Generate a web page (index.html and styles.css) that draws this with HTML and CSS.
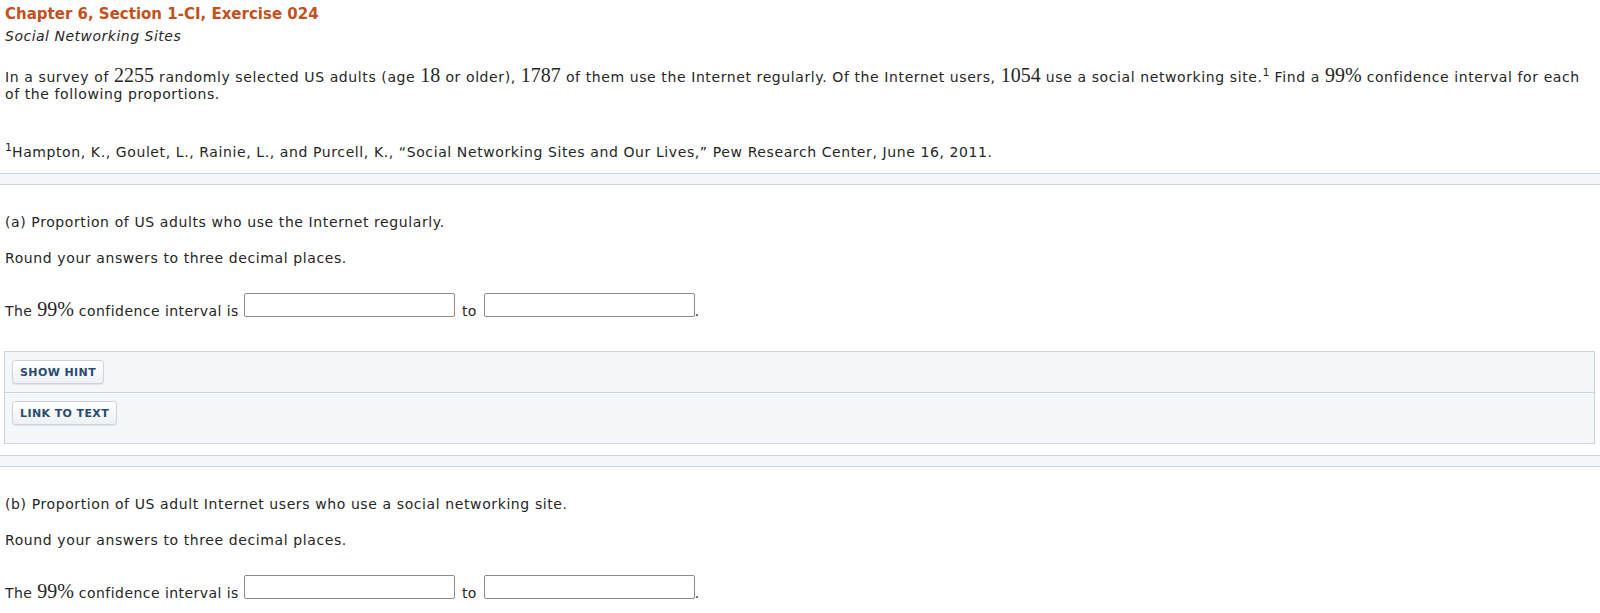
FILE: index.html
```html
<!DOCTYPE html>
<html>
<head>
<meta charset="utf-8">
<link rel="stylesheet" href="styles.css">
</head>
<body>
<div class="page">
  <div class="header">
    <div class="title">Chapter 6, Section 1-CI, Exercise 024</div>
    <div class="subtitle">Social Networking Sites</div>
  </div>
  <p class="question">In a survey of <span class="m">2255</span> randomly selected US adults (age <span class="m">18</span> or older), <span class="m">1787</span> of them use the Internet regularly. Of the Internet users, <span class="m">1054</span> use a social networking site.<sup>1</sup> Find a <span class="m">99%</span> confidence interval for each of the following proportions.</p>
  <p class="footnote"><sup>1</sup>Hampton, K., Goulet, L., Rainie, L., and Purcell, K., “Social Networking Sites and Our Lives,” Pew Research Center, June 16, 2011.</p>
  <div class="band"></div>

  <div class="part">
    <p class="line">(a) Proportion of US adults who use the Internet regularly.</p>
    <p class="line">Round your answers to three decimal places.</p>
    <p class="answer"><span class="lbl">The <span class="m">99%</span> confidence interval is</span><span class="box"></span><span class="lbl to">to</span><span class="box"></span><span class="lbl">.</span></p>
  </div>

  <div class="tools">
    <div class="tool-row"><button class="btn">SHOW HINT</button></div>
    <div class="tool-row last"><button class="btn">LINK TO TEXT</button></div>
  </div>
  <div class="band after-tools"></div>

  <div class="part">
    <p class="line">(b) Proportion of US adult Internet users who use a social networking site.</p>
    <p class="line">Round your answers to three decimal places.</p>
    <p class="answer"><span class="lbl">The <span class="m">99%</span> confidence interval is</span><span class="box"></span><span class="lbl to">to</span><span class="box"></span><span class="lbl">.</span></p>
  </div>
</div>
</body>
</html>
```

FILE: styles.css
```css
html, body {
  margin: 0;
  padding: 0;
  background: #ffffff;
}
body {
  font-family: "DejaVu Sans", Verdana, sans-serif;
  font-size: 14px;
  letter-spacing: 0.6px;
  color: #262626;
}
.page {
  padding: 5px 5px 0 5px;
}
.title {
  font-weight: bold;
  font-size: 15px;
  letter-spacing: 0;
  color: #c4501c;
  line-height: 18px;
}
.subtitle {
  font-style: italic;
  letter-spacing: 0.5px;
  line-height: 18px;
  margin-top: 4px;
}
.question {
  margin: 24px 0 0 0;
  line-height: 17px;
}
.m {
  font-family: "Liberation Serif", "Times New Roman", serif;
  font-size: 20px;
  letter-spacing: 0;
  line-height: 0;
}
sup {
  font-size: 11px;
  line-height: 0;
  vertical-align: 6px;
  letter-spacing: 0;
}
.footnote {
  margin: 41px 0 0 0;
  line-height: 17px;
}
.band {
  margin: 12px -5px 0 -5px;
  height: 10px;
  border-top: 1px solid #cfd4da;
  border-bottom: 1px solid #cfd4da;
  background: #f5f8fb;
}
.band.after-tools {
  margin-top: 11px;
}
.part {
  padding-top: 29px;
}
.line {
  margin: 0 0 19px 0;
  line-height: 17px;
}
.answer {
  margin: 26px 0 0 0;
  display: flex;
  align-items: flex-end;
  height: 24px;
  white-space: pre;
}
.lbl {
  line-height: 17px;
  letter-spacing: 0.45px;
  margin-bottom: -3px;
}
.box {
  display: block;
  width: 209px;
  height: 22px;
  border: 1px solid #8a8a8a;
  border-radius: 2px;
  background: #fff;
  margin-left: 5px;
}
.to {
  margin: 0 2px -3px 7px;
}
.tools {
  margin: 34px 0 0 -1px;
  border: 1px solid #cfd4da;
  background: #f5f8fb;
}
.tool-row {
  display: flex;
  padding: 8px 7px 8px 7px;
  border-bottom: 1px solid #cfd4da;
}
.tool-row.last {
  border-bottom: none;
  padding: 8px 7px 18px 7px;
}
.btn {
  font-family: "DejaVu Sans", Verdana, sans-serif;
  font-weight: bold;
  font-size: 11px;
  letter-spacing: 0.4px;
  color: #2b4a70;
  height: 24px;
  padding: 0 7px;
  border: 1px solid #cdd3da;
  border-radius: 3px;
  background: linear-gradient(#ffffff, #eef1f4);
  box-shadow: 0 1px 1px rgba(0,0,0,0.08);
}
```
